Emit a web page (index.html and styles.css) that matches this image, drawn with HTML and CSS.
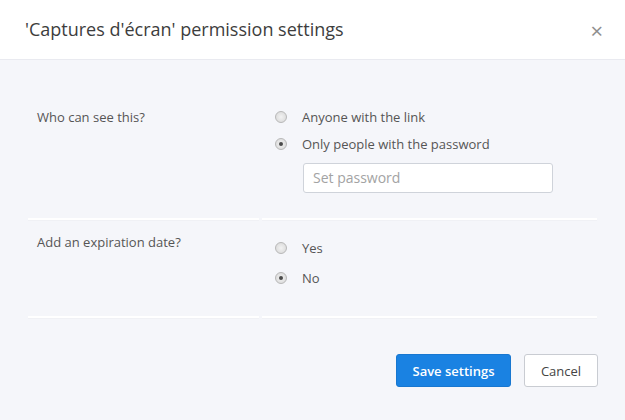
FILE: index.html
```html
<!DOCTYPE html>
<html>
<head>
<meta charset="utf-8">
<link rel="stylesheet" href="styles.css">
</head>
<body>
<div class="dialog">
  <header class="head">
    <h1 class="title">'Captures d'écran' permission settings</h1>
    <span class="close">×</span>
  </header>
  <main class="body">
    <section class="row row-first">
      <div class="col-label">Who can see this?</div>
      <div class="col-opts">
        <label class="opt"><span class="radio"></span>Anyone with the link</label>
        <label class="opt"><span class="radio on"></span>Only people with the password</label>
        <div class="input">Set password</div>
      </div>
    </section>
    <section class="row row-second">
      <div class="col-label">Add an expiration date?</div>
      <div class="col-opts">
        <label class="opt opt-b"><span class="radio"></span>Yes</label>
        <label class="opt opt-b"><span class="radio on"></span>No</label>
      </div>
    </section>
    <footer class="foot">
      <button class="btn btn-primary">Save settings</button>
      <button class="btn btn-default">Cancel</button>
    </footer>
  </main>
</div>
</body>
</html>
```

FILE: styles.css
```css
html, body {
  margin: 0;
  padding: 0;
}
body {
  width: 625px;
  height: 420px;
  overflow: hidden;
  font-family: "Open Sans", "Liberation Sans", sans-serif;
  background: #f5f6fa;
  color: #555;
}
.head {
  height: 59px;
  background: #fff;
  border-bottom: 1px solid #e9eaf0;
  display: flex;
  align-items: center;
  justify-content: space-between;
  padding: 0 22px 0 25px;
}
.title {
  margin: 0;
  font-weight: 400;
  font-size: 18px;
  color: #3d3d3d;
  margin-top: -2px;
}
.close {
  font-size: 22px;
  color: #8e8e8e;
  line-height: 1;
  margin-top: 0;
}
.body {
  padding: 37px 28px 0 28px;
}
.row {
  display: flex;
  gap: 3px;
  font-size: 13px;
  line-height: 20px;
}
.col-label, .col-opts {
  border-bottom: 2px solid #fff;
  box-shadow: 0 1px 0 #f0f1f5;
}
.col-label {
  width: 231px;
  padding-left: 9px;
  box-sizing: border-box;
  color: #555;
}
.col-opts {
  flex: 1;
  padding-left: 13px;
}
.row-first .col-label, .row-first .col-opts {
  padding-top: 10px;
  padding-bottom: 25px;
}
.row-second .col-label {
  padding-top: 12px;
  padding-bottom: 34px;
}
.row-second .col-opts {
  padding-top: 18px;
  padding-bottom: 28px;
}
.opt {
  display: flex;
  align-items: center;
  color: #555;
  margin-bottom: 7px;
}
.opt-b {
  margin-bottom: 10px;
}
.opt-b:last-child {
  margin-bottom: 0;
}
.radio {
  width: 12px;
  height: 12px;
  border-radius: 50%;
  box-sizing: border-box;
  border: 1px solid #b8b8b8;
  background: radial-gradient(circle, #f2f2f2 0%, #d6d6d6 100%);
  margin-right: 15px;
  position: relative;
}
.radio.on::after {
  content: "";
  position: absolute;
  left: 3px;
  top: 3px;
  width: 4px;
  height: 4px;
  border-radius: 50%;
  background: #4a4a4a;
}
.input {
  margin-top: 9px;
  margin-left: 28px;
  width: 250px;
  height: 30px;
  box-sizing: border-box;
  border: 1px solid #cfd3da;
  border-radius: 3px;
  background: #fff;
  color: #a3a3a3;
  font-size: 14px;
  line-height: 28px;
  padding-left: 9px;
}
.foot {
  display: flex;
  justify-content: flex-end;
  gap: 13px;
  margin-top: 36px;
}
.btn {
  height: 33px;
  font-family: "Open Sans", "Liberation Sans", sans-serif;
  font-size: 13px;
  border-radius: 3px;
  cursor: pointer;
}
.btn-primary {
  width: 115px;
  background: #1a82e2;
  border: 1px solid #1877d0;
  color: #fff;
  font-weight: 600;
}
.btn-default {
  width: 74px;
  background: #fff;
  border: 1px solid #c9ccd2;
  color: #444;
  margin-right: -1px;
}
```
